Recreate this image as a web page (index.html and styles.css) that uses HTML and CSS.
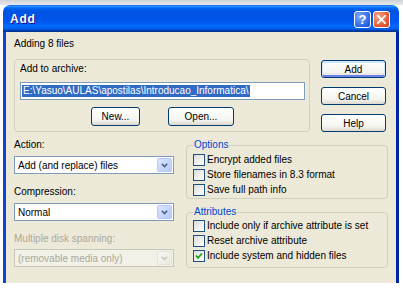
FILE: index.html
```html
<!DOCTYPE html>
<html>
<head>
<meta charset="utf-8">
<link rel="stylesheet" href="styles.css">
</head>
<body>
<div class="desktop"></div>
<div class="window">
  <div class="titlebar">
    <span class="title">Add</span>
    <div class="tb-buttons">
      <span class="tb-btn help">?</span>
      <span class="tb-btn close"><svg width="17" height="17" viewBox="0 0 17 17"><path d="M4.5 4.5 L12.5 12.5 M12.5 4.5 L4.5 12.5" stroke="#fff" stroke-width="2" stroke-linecap="square"/></svg></span>
    </div>
  </div>
  <div class="client">
    <div class="caption">Adding 8 files</div>
    <div class="upper">
      <div class="archive-group">
        <div class="label">Add to archive:</div>
        <div class="path-input"><span class="sel">E:\Yasuo\AULAS\apostilas\Introducao_Informatica\</span></div>
        <div class="archive-buttons">
          <button class="btn new">New...</button>
          <button class="btn open">Open...</button>
        </div>
      </div>
      <div class="side-buttons">
        <button class="btn default">Add</button>
        <button class="btn">Cancel</button>
        <button class="btn">Help</button>
      </div>
    </div>
    <div class="lower">
      <div class="left-col">
        <div class="label">Action:</div>
        <div class="combo"><span>Add (and replace) files</span><span class="arrow"><svg width="7" height="5" viewBox="0 0 7 5"><path d="M0.8 0.8 L3.5 3.6 L6.2 0.8" fill="none" stroke="#4D6185" stroke-width="1.6"/></svg></span></div>
        <div class="label gap">Compression:</div>
        <div class="combo"><span>Normal</span><span class="arrow"><svg width="7" height="5" viewBox="0 0 7 5"><path d="M0.8 0.8 L3.5 3.6 L6.2 0.8" fill="none" stroke="#4D6185" stroke-width="1.6"/></svg></span></div>
        <div class="label gap disabled">Multiple disk spanning:</div>
        <div class="combo off"><span>(removable media only)</span><span class="arrow"><svg width="7" height="5" viewBox="0 0 7 5"><path d="M0.8 0.8 L3.5 3.6 L6.2 0.8" fill="none" stroke="#C9C7BA" stroke-width="1.6"/></svg></span></div>
      </div>
      <div class="right-col">
        <fieldset class="group options">
          <legend>Options</legend>
          <div class="check"><span class="box"></span>Encrypt added files</div>
          <div class="check"><span class="box"></span>Store filenames in 8.3 format</div>
          <div class="check"><span class="box"></span>Save full path info</div>
        </fieldset>
        <fieldset class="group attributes">
          <legend>Attributes</legend>
          <div class="check"><span class="box"></span>Include only if archive attribute is set</div>
          <div class="check"><span class="box"></span>Reset archive attribute</div>
          <div class="check"><span class="box"><svg width="10" height="10" viewBox="0 0 10 10"><path d="M2 4.5 L4 6.8 L8 2.5" fill="none" stroke="#21A121" stroke-width="1.8"/></svg></span>Include system and hidden files</div>
        </fieldset>
      </div>
    </div>
  </div>
</div>
</body>
</html>
```
FILE: styles.css
```css
body {
  margin: 0;
  width: 403px;
  height: 289px;
  overflow: hidden;
  background: #ffffff;
  font-family: "Liberation Sans", Arial, sans-serif;
  font-size: 10px;
  color: #000;
}

.desktop {
  height: 5px;
  background: linear-gradient(#cfd3d8, #e6e8eb);
}

.window {
  margin-left: 3px;
  width: 396px;
}

.titlebar {
  height: 27px;
  box-sizing: border-box;
  border-radius: 7px 7px 0 0;
  background: linear-gradient(to bottom, #0058ee 0%, #3593ff 4%, #288eff 6%, #127dff 8%, #036ffc 10%, #0262ee 14%, #0057e5 20%, #0054e3 24%, #0055eb 56%, #005bf5 66%, #026afe 76%, #0062ef 86%, #0052d6 92%, #0040ab 94%, #003092 100%);
  display: flex;
  align-items: center;
  justify-content: space-between;
  padding: 0 9px 0 7px;
}

.title {
  color: #fff;
  font-weight: bold;
  font-size: 12px;
  letter-spacing: 0.8px;
  text-shadow: 1px 1px 0 #0f1089;
}

.tb-buttons {
  display: flex;
  gap: 2px;
  margin-top: 2px;
}

.tb-btn {
  width: 17px;
  height: 17px;
  box-sizing: border-box;
  border: 1px solid #fff;
  border-radius: 3px;
  display: flex;
  align-items: center;
  justify-content: center;
}

.tb-btn svg {
  display: block;
}

.help {
  background: radial-gradient(circle at 30% 30%, #7aa8f8, #2a66e8 70%, #1a4fd0);
  color: #fff;
  font-weight: bold;
  font-size: 13px;
  line-height: 15px;
}

.close {
  background: radial-gradient(circle at 30% 30%, #f3a68a, #e25b36 65%, #c8401c);
}

.client {
  height: 251px;
  box-sizing: border-box;
  background: #ece9d8;
  border-left: 3px solid #0d46d0;
  border-right: 3px solid #0026a8;
  padding: 6px 8px 0 8px;
}

.caption,
.label {
  line-height: 12px;
}

.upper {
  display: flex;
  margin-top: 9px;
}

.archive-group {
  width: 296px;
  height: 73px;
  box-sizing: border-box;
  border: 1px solid #d0d0bf;
  border-radius: 4px;
  padding: 3px 4px 0 5px;
}

.path-input {
  margin-top: 7px;
  height: 18px;
  box-sizing: border-box;
  border: 1px solid #7f9db9;
  background: #fff;
  padding: 2px 1px;
}

.sel {
  display: inline-block;
  background: #316ac5;
  color: #fff;
  line-height: 12px;
  padding: 0 1px;
}

.archive-buttons {
  display: flex;
  justify-content: center;
  gap: 28px;
  margin-top: 7px;
}

.btn {
  height: 19px;
  box-sizing: border-box;
  font: inherit;
  color: #000;
  border: 1px solid #003c74;
  border-radius: 3px;
  background: linear-gradient(#ffffff, #f4f4f0 70%, #dcd8cc);
  padding: 0;
}

.new {
  width: 49px;
}

.open {
  width: 66px;
}

.side-buttons {
  display: flex;
  flex-direction: column;
  gap: 9px;
  margin-left: 11px;
  margin-top: 1px;
}

.side-buttons .btn {
  width: 65px;
  height: 18px;
}

.btn.default {
  box-shadow: inset 0 1px 0 1px #cee7ff, inset 0 -1px 0 1px #6982ee;
}

.lower {
  display: flex;
  gap: 12px;
  margin-top: 7px;
}

.left-col {
  width: 160px;
}

.left-col .combo {
  margin-top: 5px;
}

.left-col .label.gap {
  margin-top: 12px;
}

.left-col .combo.off {
  margin-top: 4px;
}

.label.disabled {
  color: #aca899;
}

.combo {
  height: 18px;
  box-sizing: border-box;
  border: 1px solid #7f9db9;
  background: #fff;
  display: flex;
  align-items: center;
  padding-left: 3px;
}

.combo .arrow {
  margin-left: auto;
  margin-right: 1px;
  width: 15px;
  height: 14px;
  box-sizing: border-box;
  border: 1px solid #b9c9ef;
  border-radius: 2px;
  background: linear-gradient(135deg, #dbe6fe, #b5c8f7);
  display: flex;
  align-items: center;
  justify-content: center;
}

.combo.off {
  border-color: #c9c7ba;
  background: #f2f1e8;
  color: #aca899;
}

.combo.off .arrow {
  border-color: #e6e4da;
  background: linear-gradient(135deg, #f8f7f2, #ebe9df);
}

.right-col {
  width: 202px;
}

.group {
  margin: 0;
  border: 1px solid #d0d0bf;
  border-radius: 4px;
  padding: 1px 0 1px 6px;
  min-inline-size: auto;
}

.group legend {
  padding: 0 1px;
  line-height: 12px;
  color: #0046d5;
}

.group.attributes {
  margin-top: 7px;
  padding-top: 0;
  padding-bottom: 4px;
}

.check {
  display: flex;
  align-items: center;
  height: 15px;
  gap: 2px;
}

.box {
  width: 12px;
  height: 12px;
  box-sizing: border-box;
  border: 1px solid #1c5180;
  background: linear-gradient(135deg, #dcdcd7, #ffffff);
  display: flex;
  align-items: center;
  justify-content: center;
}
```
